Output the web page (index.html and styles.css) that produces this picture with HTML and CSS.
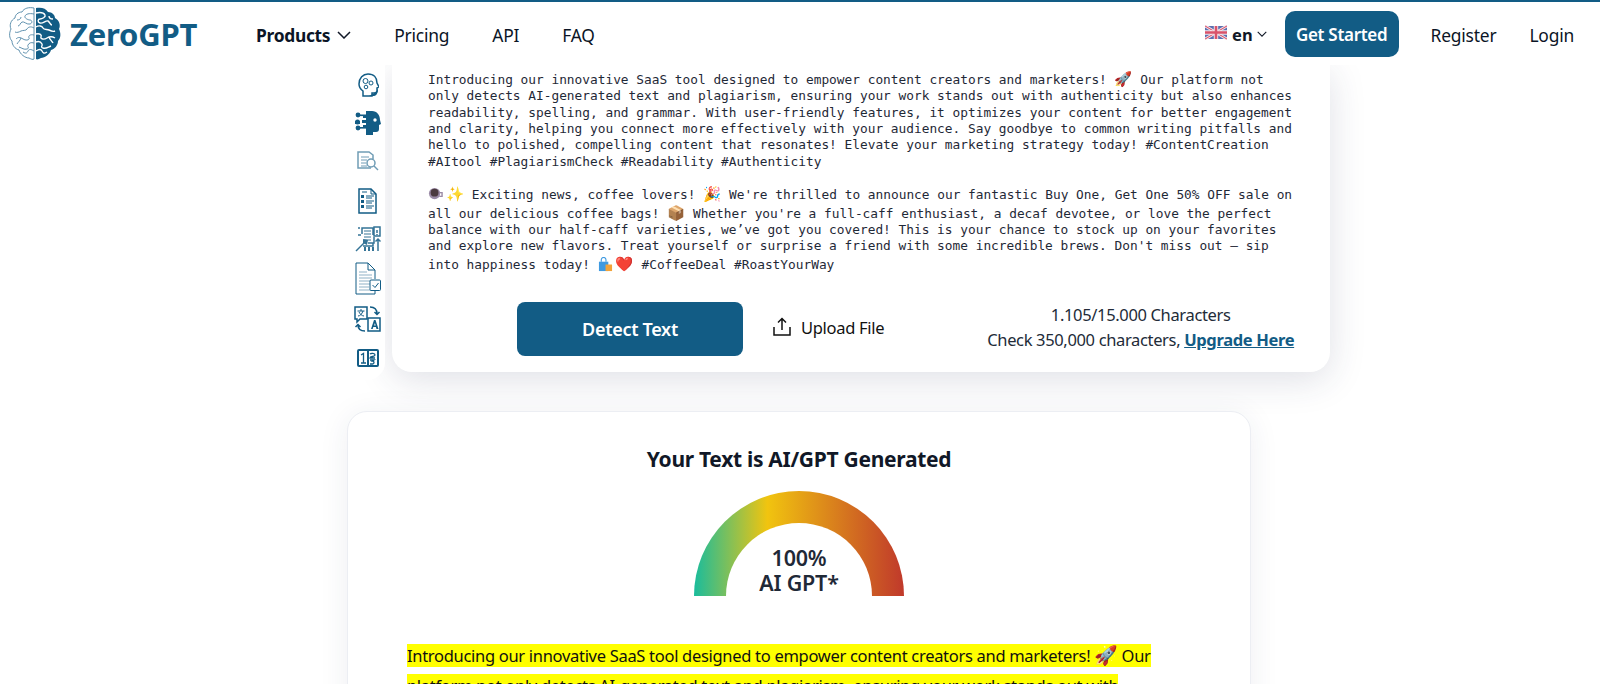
FILE: index.html
```html
<!DOCTYPE html>
<html lang="en">
<head>
<meta charset="utf-8">
<title>ZeroGPT</title>
<link rel="stylesheet" href="styles.css">
</head>
<body>
<header class="topbar">
  <a class="brand">
    <svg class="brain" viewBox="0 0 52 53" aria-hidden="true">
      <path class="brain-right" d="M27 1c5-1 10 0 12 4 4 0 7 3 7 6 4 2 6 7 4 11 2 4 2 9-1 12 0 4-3 8-7 9-1 4-6 8-10 8-2 1-4 2-5 1z"/>
      <path class="brain-lines" d="M27 6c5-1 8 0 9 2s-3 4-5 4 -3 3 0 4 6-3 8-2 2 4 4 4M27 20c3-2 6-1 7 1s4 1 6 2 4 2 6 1M27 27c4-1 6 1 5 3s3 3 6 1 5-2 8 0M27 35c3-1 5 0 6 2s-2 3 1 4 5-1 8-2M27 44c3-2 5-2 6 0s2 3 5 1M40 9c0 2 2 3 4 3M40 30c1 3 3 4 4 6"/>
      <path class="brain-left" d="M25 1c-5-1-10 0-12 4-4 0-7 3-7 6-4 2-6 7-4 11-2 4-2 9 1 12 0 4 3 8 7 9 1 4 6 8 10 8 2 1 4 2 5 1z"/>
      <path class="brain-left thin" d="M25 7c-5-1-8 0-9 2s3 4 5 4 3 3 0 4-6-3-8-2-2 4-4 4M25 21c-3-2-6-1-7 1s-4 1-6 2-4 2-6 1M25 28c-4-1-6 1-5 3s-3 3-6 1-5-2-7 0M25 36c-3-1-5 0-6 2s2 3-1 4-5-1-8-2M25 44c-3-2-5-2-6 0s-2 3-5 1M12 10c0 2-2 3-4 3M12 31c-1 3-3 4-4 6"/>
    </svg>
    <span class="brand-name">ZeroGPT</span>
  </a>
  <nav class="main-nav">
    <a class="nav-link strong">Products
      <svg class="chev" viewBox="0 0 14 8"><path d="M1 1l6 6 6-6"/></svg>
    </a>
    <a class="nav-link">Pricing</a>
    <a class="nav-link">API</a>
    <a class="nav-link">FAQ</a>
  </nav>
  <div class="nav-right">
    <span class="lang">
      <svg class="flag" viewBox="0 0 60 36">
        <rect width="60" height="36" rx="3" fill="#5b6fb0"/>
        <path d="M0 0l60 36M60 0L0 36" stroke="#f3e9ee" stroke-width="8"/>
        <path d="M0 0l60 36M60 0L0 36" stroke="#d9536b" stroke-width="3"/>
        <path d="M30 0v36M0 18h60" stroke="#f3e9ee" stroke-width="12"/>
        <path d="M30 0v36M0 18h60" stroke="#d9536b" stroke-width="7"/>
      </svg>
      <b class="lang-code">en</b>
      <svg class="chev small" viewBox="0 0 14 8"><path d="M1 1l6 6 6-6"/></svg>
    </span>
    <a class="cta">Get Started</a>
    <a class="nav-link">Register</a>
    <a class="nav-link">Login</a>
  </div>
</header>

<main class="page">
  <section class="detector">
    <aside class="tools">
      <div class="slot"><svg class="i1" viewBox="0 0 22 24"><path class="ln thick" d="M2 11C2 5 6 1 11 1c6 0 9 4 9 9l2 4-2 1v3c0 1-1 2-3 2h-2v3H6v-5c-3-2-4-4-4-7z"/><circle class="ln" cx="8.500" cy="8" r="2.500"/><circle class="ln" cx="14" cy="10" r="2"/><circle class="ln" cx="9" cy="14" r="1.800"/><path class="solid" d="M21 15c-1 4-5 6-9 8h5c3 0 4-4 4-8z"/></svg></div>
      <div class="slot"><svg class="i2" viewBox="0 0 26 25"><path class="solid" d="M11 1h6c5 0 8 4 8 9l1 4-2 1v4c0 2-1 3-3 3h-3v3H11v-7H8v-3h3v-2H7v-3h4V8H8V5h3z"/><circle cx="20" cy="10" r="1.700" fill="#fff"/><rect class="solid" x="4" y="4.500" width="8" height="1.600"/><circle class="solid" cx="3" cy="5" r="2.400"/><rect class="solid" x="0" y="11" width="5" height="3"/><circle class="solid" cx="2.500" cy="12" r="2.500"/><rect class="solid" x="4" y="17" width="8" height="1.600"/><circle class="solid" cx="3" cy="18" r="2.400"/></svg></div>
      <div class="slot"><svg class="i3 faded" viewBox="0 0 22 21"><path class="ln thick" d="M14 17H1V1h11l4 3v4"/><path class="ln" d="M4 6h8M4 9h6M4 12h5M4 15h6"/><circle class="ln thick" cx="14" cy="12" r="4"/><path class="ln thick" d="M17 15l4 4"/></svg></div>
      <div class="slot"><svg class="i4" viewBox="0 0 19 26"><path class="ln thick" d="M1 1h12l5 5v19H1z"/><path class="ln" d="M13 1v5h5"/><path class="solid" d="M3 7h3v3H3zM3 12h3v3H3zM3 17h3v3H3z"/><path class="ln" d="M8 8h8M8 10h6M8 13h8M8 15h6M8 18h8M8 20h6M4 4h5"/></svg></div>
      <div class="slot"><svg class="i5 faded2" viewBox="0 0 26 26"><path class="ln thick" d="M7 8V2h11v7M19 1h6v9h-6zM3 2h2M3 9h3"/><path class="ln" d="M9 5h7M9 8h7M9 11h7M9 14h7"/><path class="ln thick" d="M22 4v3M22 8v1M23 25V13M20.500 15.500L23 13l2.500 2.500M13 17h6v-6M8 20h10v-3"/><path class="ln thick" d="M1 25l9-9"/><path class="solid" d="M8 13l5 1-1 5-4-2zM9 21h2v4H9zM13 21h2v4h-2zM17 21h2v4h-2z"/></svg></div>
      <div class="slot"><svg class="i6" viewBox="0 0 26 33"><path class="ln" d="M20 25v7H1V1h12l7 7v9"/><path class="ln" d="M13 1v7h7"/><path class="ln light" d="M4 10h8M4 13h13M4 16h13M4 19h13M4 22h13M4 25h10M4 28h13"/><rect class="ln plate" x="15" y="18" width="10.500" height="10.500" rx="1"/><path class="ln" d="M17.500 23l2.500 2.500 3.500-4.500"/></svg></div>
      <div class="slot"><svg class="i7" viewBox="0 0 27 28"><path class="ln thick" d="M1 2h12v12H6l-3 3v-3H1z"/><path class="ln" d="M3.500 6h7M7 4v2M9 6c-1 3-3 5-5 5M5 7c1 2 3 4 5 4"/><path class="ln thick" d="M14 13h12v13H14z"/><path class="solid" d="M17 24l3-9h1.500l3 9h-2l-.6-2h-2.600l-.6 2zm3.100-3.500h1.600l-.8-2.500z"/><path class="ln thick" d="M16 2c4 0 7 2 7 7M20.500 7l2.500 2.500L25.500 7M11 26c-4 0-7-2-7-6M1.500 22L4 19.500 6.500 22"/></svg></div>
      <div class="slot"><svg class="i8" viewBox="0 0 22 18"><rect class="outline" x="1" y="1" width="20" height="16" rx="1"/><path class="outline" d="M11 1v16"/><path class="outline thin" d="M4 6l2.500-1.500V14M4 14h5"/><path class="outline thin" d="M13 5c1-1 5-1 5 1s-5 1-5 3h5M13 11h4l-1.500 1c2 0 2 3 0 3H13"/></svg></div>
    </aside>
    <div class="card">
      <div class="input-text">
        <p class="para"><span class="line">Introducing our innovative SaaS tool designed to empower content creators and marketers! <span class="em">🚀</span> Our platform not</span><span class="line">only detects AI-generated text and plagiarism, ensuring your work stands out with authenticity but also enhances</span><span class="line">readability, spelling, and grammar. With user-friendly features, it optimizes your content for better engagement</span><span class="line">and clarity, helping you connect more effectively with your audience. Say goodbye to common writing pitfalls and</span><span class="line">hello to polished, compelling content that resonates! Elevate your marketing strategy today! #ContentCreation</span><span class="line">#AItool #PlagiarismCheck #Readability #Authenticity</span></p>
        <p class="para second"><span class="line tall"><svg class="em-svg" viewBox="0 0 16 16"><circle cx="7" cy="7" r="6" fill="#9a8aa6"/><circle cx="7" cy="6" r="4.200" fill="#4b3a3f"/><path d="M12 6h3v4h-3" fill="none" stroke="#9a8aa6" stroke-width="1.500"/></svg><span class="em">✨</span> Exciting news, coffee lovers! <span class="em">🎉</span> We're thrilled to announce our fantastic Buy One, Get One 50% OFF sale on</span><span class="line">all our delicious coffee bags! <span class="em">📦</span> Whether you're a full-caff enthusiast, a decaf devotee, or love the perfect</span><span class="line">balance with our half-caff varieties, we’ve got you covered! This is your chance to stock up on your favorites</span><span class="line tall">and explore new flavors. Treat yourself or surprise a friend with some incredible brews. Don't miss out – sip</span><span class="line">into happiness today! <svg class="em-svg" viewBox="0 0 16 16"><path d="M1 5h10v10H1z" fill="#3f9ae0"/><path d="M8 8h7v7H8z" fill="#f2a33a"/><path d="M3.500 5V3a2.500 2.500 0 0 1 5 0v2" fill="none" stroke="#3f9ae0" stroke-width="1.200"/></svg><span class="em">❤️</span> #CoffeeDeal #RoastYourWay</span></p>
      </div>
      <div class="actions">
        <button class="detect">Detect Text</button>
        <a class="upload">
          <svg class="upload-icon" viewBox="0 0 20 20"><path d="M10 13V2M6 5.500L10 1.500l4 4M2 10v8h16v-8"/></svg>
          Upload File
        </a>
        <div class="count">
          <div>1.105/15.000 Characters</div>
          <div>Check 350,000 characters, <a class="upgrade">Upgrade Here</a></div>
        </div>
      </div>
    </div>
  </section>

  <section class="result">
    <h2 class="result-title">Your Text is AI/GPT Generated</h2>
    <div class="gauge">
      <div class="gauge-hole">
        <div class="gauge-label">100%<br>AI GPT*</div>
      </div>
    </div>
    <div class="highlighted">
      <span class="hl">Introducing our innovative SaaS tool designed to empower content creators and marketers! <span class="em big">🚀</span> Our</span><br>
      <span class="hl">platform not only detects AI-generated text and plagiarism, ensuring your work stands out with</span>
    </div>
  </section>
</main>
</body>
</html>
```
FILE: styles.css
```css
* { box-sizing: border-box; }
html, body { margin: 0; height: 684px; overflow: hidden; background: #fff; }
body { font-family: "Noto Sans", "Open Sans", sans-serif; color: #111827; }

.topbar {
  position: relative;
  z-index: 5;
  height: 65px;
  display: flex;
  align-items: center;
  border-top: 2px solid #125c85;
  background: #fff;
  padding-left: 9px;
}
.brand { display: flex; align-items: center; gap: 9px; width: 247px; }
.brain { width: 52px; height: 53px; flex: none; }
.brain-right { fill: #125c85; }
.brain-lines { fill: none; stroke: #fff; stroke-width: 1.400; }
.brain-left { fill: #fff; stroke: #4f86a6; stroke-width: .9; }
.brain-left.thin { fill: none; }
.brand-name { font-size: 31px; font-weight: 700; color: #125c85; letter-spacing: -.2px; }

.main-nav { display: flex; align-items: center; gap: 43px; }
.nav-link { font-size: 17.400px; color: #0b1526; letter-spacing: -.2px; display: flex; align-items: center; gap: 7px; padding-top: 2px; }
.nav-link.strong { font-weight: 700; letter-spacing: -.3px; }
.chev { width: 14px; height: 8px; fill: none; stroke: #111827; stroke-width: 1.500; }
.chev.small { width: 10px; height: 6px; stroke-width: 1.500; margin-left: -1px; }

.nav-right { margin-left: auto; display: flex; align-items: center; padding-right: 26px; }
.lang { display: flex; align-items: center; gap: 5px; margin-right: 18px; padding-top: 1px; }
.flag { width: 22px; height: 15px; margin-top: -3px; }
.lang-code { font-size: 16.500px; }
.cta {
  background: #125c85;
  color: #fff;
  font-size: 17px;
  font-weight: 600;
  letter-spacing: -.3px;
  width: 114px;
  height: 46px;
  padding-top: 2px;
  border-radius: 10px;
  display: flex;
  align-items: center;
  justify-content: center;
  margin-right: 32px;
}
.nav-right .nav-link + .nav-link { margin-left: 33px; }

.page { display: flex; flex-direction: column; align-items: flex-start; padding-left: 347px; }
.detector { display: flex; align-items: flex-start; }
.tools {
  position: relative;
  z-index: 1;
  width: 35px;
  height: 315px;
  margin: 0 7px 0 3px;
  background: #fff;
  border-radius: 0 0 20px 20px;
  display: flex;
  flex-direction: column;
  padding-top: 1px;
}
.slot { height: 38.900px; display: flex; align-items: center; justify-content: center; flex: none; }
.i1 { width: 22px; height: 24px; }
.i2 { width: 26px; height: 25px; margin-bottom: 4px; }
.i3 { width: 22px; height: 21px; margin-bottom: 4px; }
.i4 { width: 19px; height: 26px; margin-bottom: 2px; }
.i5 { width: 26px; height: 26px; margin-bottom: 5px; }
.i6 { width: 26px; height: 33px; margin-bottom: 2px; }
.i7 { width: 27px; height: 28px; }
.i8 { width: 22px; height: 18px; }
.ln { fill: none; stroke: #125c85; stroke-width: 1; }
.ln.thick { stroke-width: 1.500; }
.ln.light { stroke: #8fb1c6; }
.ln.plate { fill: #fff; }
.solid { fill: #125c85; }
.outline { fill: none; stroke: #125c85; stroke-width: 2; }
.outline.thin { stroke-width: 1.300; }
.faded { opacity: .6; }
.faded2 { opacity: .85; }

.card {
  width: 938px;
  height: 307px;
  background: #fff;
  border-radius: 0 0 20px 20px;
  box-shadow: 0 8px 36px rgba(40, 45, 90, .15);
  padding: 7px 0 0 36px;
}
.para {
  margin: 0;
  font-family: "DejaVu Sans Mono", "Liberation Mono", monospace;
  font-size: 12.820px;
  line-height: 16.330px;
  white-space: pre;
  color: #1f2937;
}
.para.second { margin-top: 17.400px; }
.line { display: block; height: 16.330px; }
.line.tall { margin-bottom: 2px; }
.em { font-family: "Noto Color Emoji", "Noto Sans", sans-serif; font-size: 14.500px; line-height: 14px; }
.em.big { font-size: 19px; }
.em-svg { width: 15px; height: 15px; vertical-align: -3px; margin-right: 3px; }

.actions { display: flex; align-items: center; margin-top: 29px; padding-left: 89px; }
.detect {
  width: 226px;
  height: 54px;
  border: 0;
  border-radius: 8px;
  background: #125c85;
  color: #fff;
  font-family: inherit;
  font-size: 18px;
  font-weight: 600;
  letter-spacing: -.3px;
}
.upload { display: flex; align-items: center; gap: 9px; margin-left: 29px; font-size: 16.500px; letter-spacing: -.3px; padding-bottom: 4px; color: #111; }
.upload-icon { width: 20px; height: 20px; fill: none; stroke: #111; stroke-width: 1.500; }
.count { margin-left: 103px; padding-bottom: 4px; text-align: center; font-size: 16.500px; letter-spacing: -.35px; line-height: 25px; color: #222b38; }
.upgrade { font-weight: 700; color: #125c85; text-decoration: underline; }

.result {
  width: 904px;
  height: 330px;
  margin-top: 31px;
  background: #fff;
  border: 1px solid #eceef3;
  border-radius: 20px;
  box-shadow: 0 4px 30px rgba(40, 45, 90, .08);
  display: flex;
  flex-direction: column;
  align-items: center;
  padding-top: 32px;
}
.result-title { margin: 0; font-size: 21px; line-height: 30px; font-weight: 700; color: #111827; letter-spacing: -.3px; }
.gauge {
  width: 210px;
  height: 105px;
  margin-top: 17px;
  border-radius: 105px 105px 0 0;
  background: linear-gradient(90deg, #1abc9c 0%, #f1c40f 35%, #c0392b 100%);
  display: flex;
  align-items: flex-end;
  justify-content: center;
}
.gauge-hole {
  width: 146px;
  height: 73px;
  border-radius: 73px 73px 0 0;
  background: #fff;
  display: flex;
  align-items: flex-end;
  justify-content: center;
}
.gauge-label { font-size: 21.500px; font-weight: 600; line-height: 25px; text-align: center; color: #1f2937; letter-spacing: -.2px; padding-bottom: 1px; }
.highlighted { align-self: flex-start; margin: 45px 0 0 59px; font-size: 16.500px; line-height: 30px; letter-spacing: -.3px; white-space: nowrap; color: #111; }
.hl { background: #ff0; }
```
